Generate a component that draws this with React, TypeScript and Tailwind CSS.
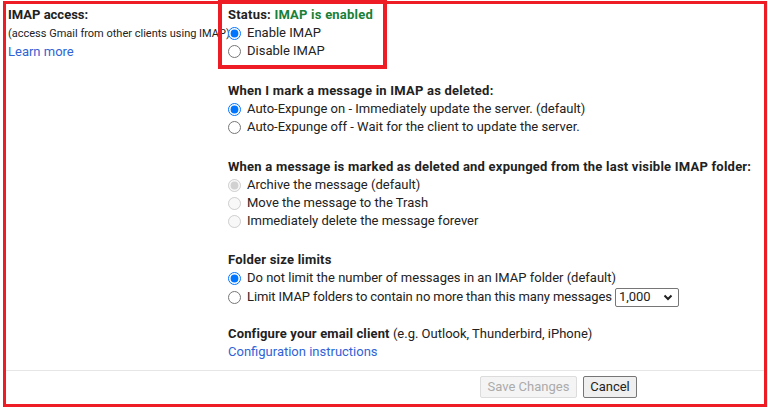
import React from 'react';

interface RadioProps {
  name: string;
  label: React.ReactNode;
  checked?: boolean;
  disabled?: boolean;
  tall?: boolean;
}

const Radio = ({ name, label, checked, disabled, tall }: RadioProps) => (
  <label className={`flex items-center ${tall ? 'h-[20px]' : 'h-[18px]'}`}>
    <input
      type="radio"
      name={name}
      defaultChecked={checked}
      disabled={disabled}
      className="m-0 h-[13px] w-[13px] shrink-0"
    />
    <span className="ml-[6px] flex items-center whitespace-nowrap">{label}</span>
  </label>
);

const Heading = ({ children, className = '' }: { children: React.ReactNode; className?: string }) => (
  <div className={`font-bold leading-[18px] tracking-[0.22px] ${className}`}>{children}</div>
);

export default function App() {
  return (
    <div className="relative h-[409px] w-[768px] overflow-hidden bg-white font-[Roboto,'Liberation_Sans',Arial,sans-serif] text-[13px] leading-[18px] text-[#222]">
      <div className="ml-[3px] mt-[1px] flex h-[406px] w-[764px] flex-col border-[3px] border-[#ee1c25]">
        <div className="grid grid-cols-[222px_1fr] pt-[2px]">
          {/* Left label column */}
          <div className="pl-[2px]">
            <div className="font-bold">IMAP access:</div>
            <div className="mt-[1px] whitespace-nowrap text-[11px]">(access Gmail from other clients using IMAP)</div>
            <a className="block text-[#2f63d6]">Learn more</a>
          </div>

          {/* Settings column */}
          <div>
            <Heading>
              Status: <span className="text-[#188038]">IMAP is enabled</span>
            </Heading>
            <Radio name="imap" label="Enable IMAP" checked />
            <Radio name="imap" label="Disable IMAP" />

            <Heading className="mt-[22px]">When I mark a message in IMAP as deleted:</Heading>
            <Radio name="expunge" label="Auto-Expunge on - Immediately update the server. (default)" checked />
            <Radio name="expunge" label="Auto-Expunge off - Wait for the client to update the server." />

            <Heading className="mt-[22px]">
              When a message is marked as deleted and expunged from the last visible IMAP folder:
            </Heading>
            <Radio name="deleted" label="Archive the message (default)" checked disabled />
            <Radio name="deleted" label="Move the message to the Trash" disabled />
            <Radio name="deleted" label="Immediately delete the message forever" disabled />

            <Heading className="mt-[21px]">Folder size limits</Heading>
            <Radio name="limit" label="Do not limit the number of messages in an IMAP folder (default)" checked />
            <Radio
              name="limit"
              tall
              label={
                <>
                  <span className="tracking-[-0.1px]">Limit IMAP folders to contain no more than this many messages</span>
                  <span className="ml-[3px] flex h-[19px] w-[64px] items-center justify-between rounded-[2px] border border-[#767676] pl-[3px] pr-[5px]">
                    1,000
                    <svg width="10" height="7" viewBox="0 0 10 7" fill="none">
                      <path d="M1.5 1.5 5 5l3.5-3.5" stroke="#222" strokeWidth="2" />
                    </svg>
                  </span>
                </>
              }
            />

            <div className="mt-[18px]">
              <span className="font-bold tracking-[0.15px]">Configure your email client</span> (e.g. Outlook, Thunderbird, iPhone)
            </div>
            <a className="block text-[#2f63d6]">Configuration instructions</a>
          </div>
        </div>

        {/* Footer actions */}
        <div className="mt-[9px] border-t border-[#e6e6e6] pt-[5px]">
          <div className="flex gap-[6px] pl-[474px]">
            <button
              disabled
              className="h-[22px] w-[97px] rounded-[2px] border border-[#dcdcdc] bg-[#f4f4f4] text-[#ababab]"
            >
              Save Changes
            </button>
            <button className="h-[22px] w-[54px] rounded-[2px] border border-[#767676] bg-[#efefef] text-[#222]">
              Cancel
            </button>
          </div>
        </div>
      </div>

      {/* Annotation box over the status block */}
      <div className="pointer-events-none absolute left-[218px] top-0 h-[69px] w-[169px] border-[4px] border-[#ee1c25]" />
    </div>
  );
}
